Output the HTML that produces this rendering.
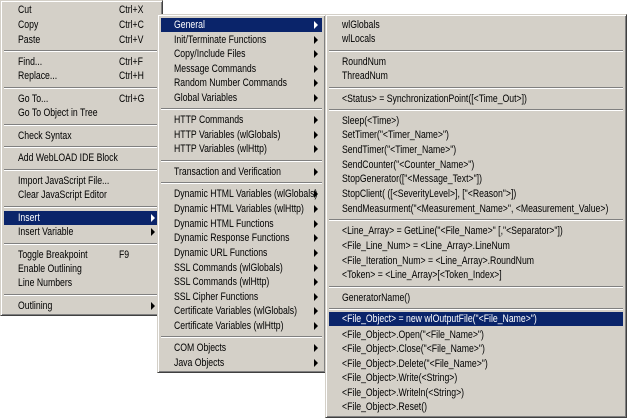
<!DOCTYPE html><html><head><meta charset="utf-8"><style>
body{margin:0;width:627px;height:417px;background:#fff;position:relative;overflow:hidden;font-family:"Liberation Sans",sans-serif;font-size:11px;color:#000}
.m{position:absolute;background:#d4d0c8;border-top:1px solid #d4d0c8;border-left:1px solid #d4d0c8;border-right:1px solid #404040;border-bottom:1px solid #404040;box-shadow:inset 1px 1px #fff,inset -1px -1px #808080;box-sizing:border-box;overflow:hidden}
.i{position:absolute;left:3px;right:3px;height:14px;line-height:14px;white-space:nowrap}
.i span{position:absolute;transform:scaleX(0.79);transform-origin:0 50%}
.h{background:#0a246a;color:#fff}
.a{position:absolute;right:4px;top:3px;width:0;height:0;border-top:4px solid transparent;border-bottom:4px solid transparent;border-left:4px solid #000}
.h .a{border-left-color:#fff}
.s{position:absolute;left:3px;right:3px;height:1px;background:#808080;border-bottom:1px solid #fff}
</style></head><body>
<div class="m" style="left:0;top:0;width:163px;height:316px">
<div class="i" style="top:2px"><span style="left:14px">Cut</span><span style="left:115px">Ctrl+X</span></div>
<div class="i" style="top:17px"><span style="left:14px">Copy</span><span style="left:115px">Ctrl+C</span></div>
<div class="i" style="top:32px"><span style="left:14px">Paste</span><span style="left:115px">Ctrl+V</span></div>
<div class="s" style="top:49px"></div>
<div class="i" style="top:54px"><span style="left:14px">Find...</span><span style="left:115px">Ctrl+F</span></div>
<div class="i" style="top:68px"><span style="left:14px">Replace...</span><span style="left:115px">Ctrl+H</span></div>
<div class="s" style="top:86px"></div>
<div class="i" style="top:91px"><span style="left:14px">Go To...</span><span style="left:115px">Ctrl+G</span></div>
<div class="i" style="top:105px"><span style="left:14px">Go To Object in Tree</span></div>
<div class="s" style="top:123px"></div>
<div class="i" style="top:128px"><span style="left:14px">Check Syntax</span></div>
<div class="s" style="top:145px"></div>
<div class="i" style="top:150px"><span style="left:14px">Add WebLOAD IDE Block</span></div>
<div class="s" style="top:168px"></div>
<div class="i" style="top:173px"><span style="left:14px">Import JavaScript File...</span></div>
<div class="i" style="top:187px"><span style="left:14px">Clear JavaScript Editor</span></div>
<div class="s" style="top:205px"></div>
<div class="i h" style="top:210px"><span style="left:14px">Insert</span><i class="a"></i></div>
<div class="i" style="top:224px"><span style="left:14px">Insert Variable</span><i class="a"></i></div>
<div class="s" style="top:242px"></div>
<div class="i" style="top:247px"><span style="left:14px">Toggle Breakpoint</span><span style="left:115px">F9</span></div>
<div class="i" style="top:261px"><span style="left:14px">Enable Outlining</span></div>
<div class="i" style="top:275px"><span style="left:14px">Line Numbers</span></div>
<div class="s" style="top:293px"></div>
<div class="i" style="top:298px"><span style="left:14px">Outlining</span><i class="a"></i></div>
</div>
<div class="m" style="left:157px;top:14px;width:169px;height:359px">
<div class="i h" style="top:3px"><span style="left:13px">General</span><i class="a"></i></div>
<div class="i" style="top:18px"><span style="left:13px">Init/Terminate Functions</span><i class="a"></i></div>
<div class="i" style="top:32px"><span style="left:13px">Copy/Include Files</span><i class="a"></i></div>
<div class="i" style="top:47px"><span style="left:13px">Message Commands</span><i class="a"></i></div>
<div class="i" style="top:61px"><span style="left:13px">Random Number Commands</span><i class="a"></i></div>
<div class="i" style="top:76px"><span style="left:13px">Global Variables</span><i class="a"></i></div>
<div class="s" style="top:93px"></div>
<div class="i" style="top:98px"><span style="left:13px">HTTP Commands</span><i class="a"></i></div>
<div class="i" style="top:113px"><span style="left:13px">HTTP Variables (wlGlobals)</span><i class="a"></i></div>
<div class="i" style="top:127px"><span style="left:13px">HTTP Variables (wlHttp)</span><i class="a"></i></div>
<div class="s" style="top:145px"></div>
<div class="i" style="top:150px"><span style="left:13px">Transaction and Verification</span><i class="a"></i></div>
<div class="s" style="top:167px"></div>
<div class="i" style="top:172px"><span style="left:13px">Dynamic HTML Variables (wlGlobals)</span><i class="a"></i></div>
<div class="i" style="top:187px"><span style="left:13px">Dynamic HTML Variables (wlHttp)</span><i class="a"></i></div>
<div class="i" style="top:202px"><span style="left:13px">Dynamic HTML Functions</span><i class="a"></i></div>
<div class="i" style="top:216px"><span style="left:13px">Dynamic Response Functions</span><i class="a"></i></div>
<div class="i" style="top:231px"><span style="left:13px">Dynamic URL Functions</span><i class="a"></i></div>
<div class="i" style="top:246px"><span style="left:13px">SSL Commands (wlGlobals)</span><i class="a"></i></div>
<div class="i" style="top:260px"><span style="left:13px">SSL Commands (wlHttp)</span><i class="a"></i></div>
<div class="i" style="top:275px"><span style="left:13px">SSL Cipher Functions</span><i class="a"></i></div>
<div class="i" style="top:289px"><span style="left:13px">Certificate Variables (wlGlobals)</span><i class="a"></i></div>
<div class="i" style="top:304px"><span style="left:13px">Certificate Variables (wlHttp)</span><i class="a"></i></div>
<div class="s" style="top:321px"></div>
<div class="i" style="top:326px"><span style="left:13px">COM Objects</span><i class="a"></i></div>
<div class="i" style="top:341px"><span style="left:13px">Java Objects</span><i class="a"></i></div>
</div>
<div class="m" style="left:325px;top:14px;width:302px;height:404px">
<div class="i" style="top:3px"><span style="left:13px">wlGlobals</span></div>
<div class="i" style="top:17px"><span style="left:13px">wlLocals</span></div>
<div class="s" style="top:35px"></div>
<div class="i" style="top:40px"><span style="left:13px">RoundNum</span></div>
<div class="i" style="top:54px"><span style="left:13px">ThreadNum</span></div>
<div class="s" style="top:72px"></div>
<div class="i" style="top:77px"><span style="left:13px">&lt;Status&gt; = SynchronizationPoint([&lt;Time_Out&gt;])</span></div>
<div class="s" style="top:94px"></div>
<div class="i" style="top:99px"><span style="left:13px">Sleep(&lt;Time&gt;)</span></div>
<div class="i" style="top:113px"><span style="left:13px">SetTimer("&lt;Timer_Name&gt;")</span></div>
<div class="i" style="top:128px"><span style="left:13px">SendTimer("&lt;Timer_Name&gt;")</span></div>
<div class="i" style="top:143px"><span style="left:13px">SendCounter("&lt;Counter_Name&gt;")</span></div>
<div class="i" style="top:157px"><span style="left:13px">StopGenerator(["&lt;Message_Text&gt;"])</span></div>
<div class="i" style="top:172px"><span style="left:13px">StopClient( ([&lt;SeverityLevel&gt;], ["&lt;Reason"&gt;])</span></div>
<div class="i" style="top:187px"><span style="left:13px">SendMeasurment("&lt;Measurement_Name&gt;", &lt;Measurement_Value&gt;)</span></div>
<div class="s" style="top:204px"></div>
<div class="i" style="top:209px"><span style="left:13px">&lt;Line_Array&gt; = GetLine("&lt;File_Name&gt;" [,"&lt;Separator&gt;"])</span></div>
<div class="i" style="top:224px"><span style="left:13px">&lt;File_Line_Num&gt; = &lt;Line_Array&gt;.LineNum</span></div>
<div class="i" style="top:239px"><span style="left:13px">&lt;File_Iteration_Num&gt; = &lt;Line_Array&gt;.RoundNum</span></div>
<div class="i" style="top:253px"><span style="left:13px">&lt;Token&gt; = &lt;Line_Array&gt;[&lt;Token_Index&gt;]</span></div>
<div class="s" style="top:271px"></div>
<div class="i" style="top:276px"><span style="left:13px">GeneratorName()</span></div>
<div class="s" style="top:293px"></div>
<div class="i h" style="top:297px"><span style="left:13px">&lt;File_Object&gt; = new wlOutputFile("&lt;File_Name&gt;")</span></div>
<div class="i" style="top:313px"><span style="left:13px">&lt;File_Object&gt;.Open("&lt;File_Name&gt;")</span></div>
<div class="i" style="top:327px"><span style="left:13px">&lt;File_Object&gt;.Close("&lt;File_Name&gt;")</span></div>
<div class="i" style="top:342px"><span style="left:13px">&lt;File_Object&gt;.Delete("&lt;File_Name&gt;")</span></div>
<div class="i" style="top:356px"><span style="left:13px">&lt;File_Object&gt;.Write(&lt;String&gt;)</span></div>
<div class="i" style="top:371px"><span style="left:13px">&lt;File_Object&gt;.Writeln(&lt;String&gt;)</span></div>
<div class="i" style="top:385px"><span style="left:13px">&lt;File_Object&gt;.Reset()</span></div>
</div>
</body></html>
